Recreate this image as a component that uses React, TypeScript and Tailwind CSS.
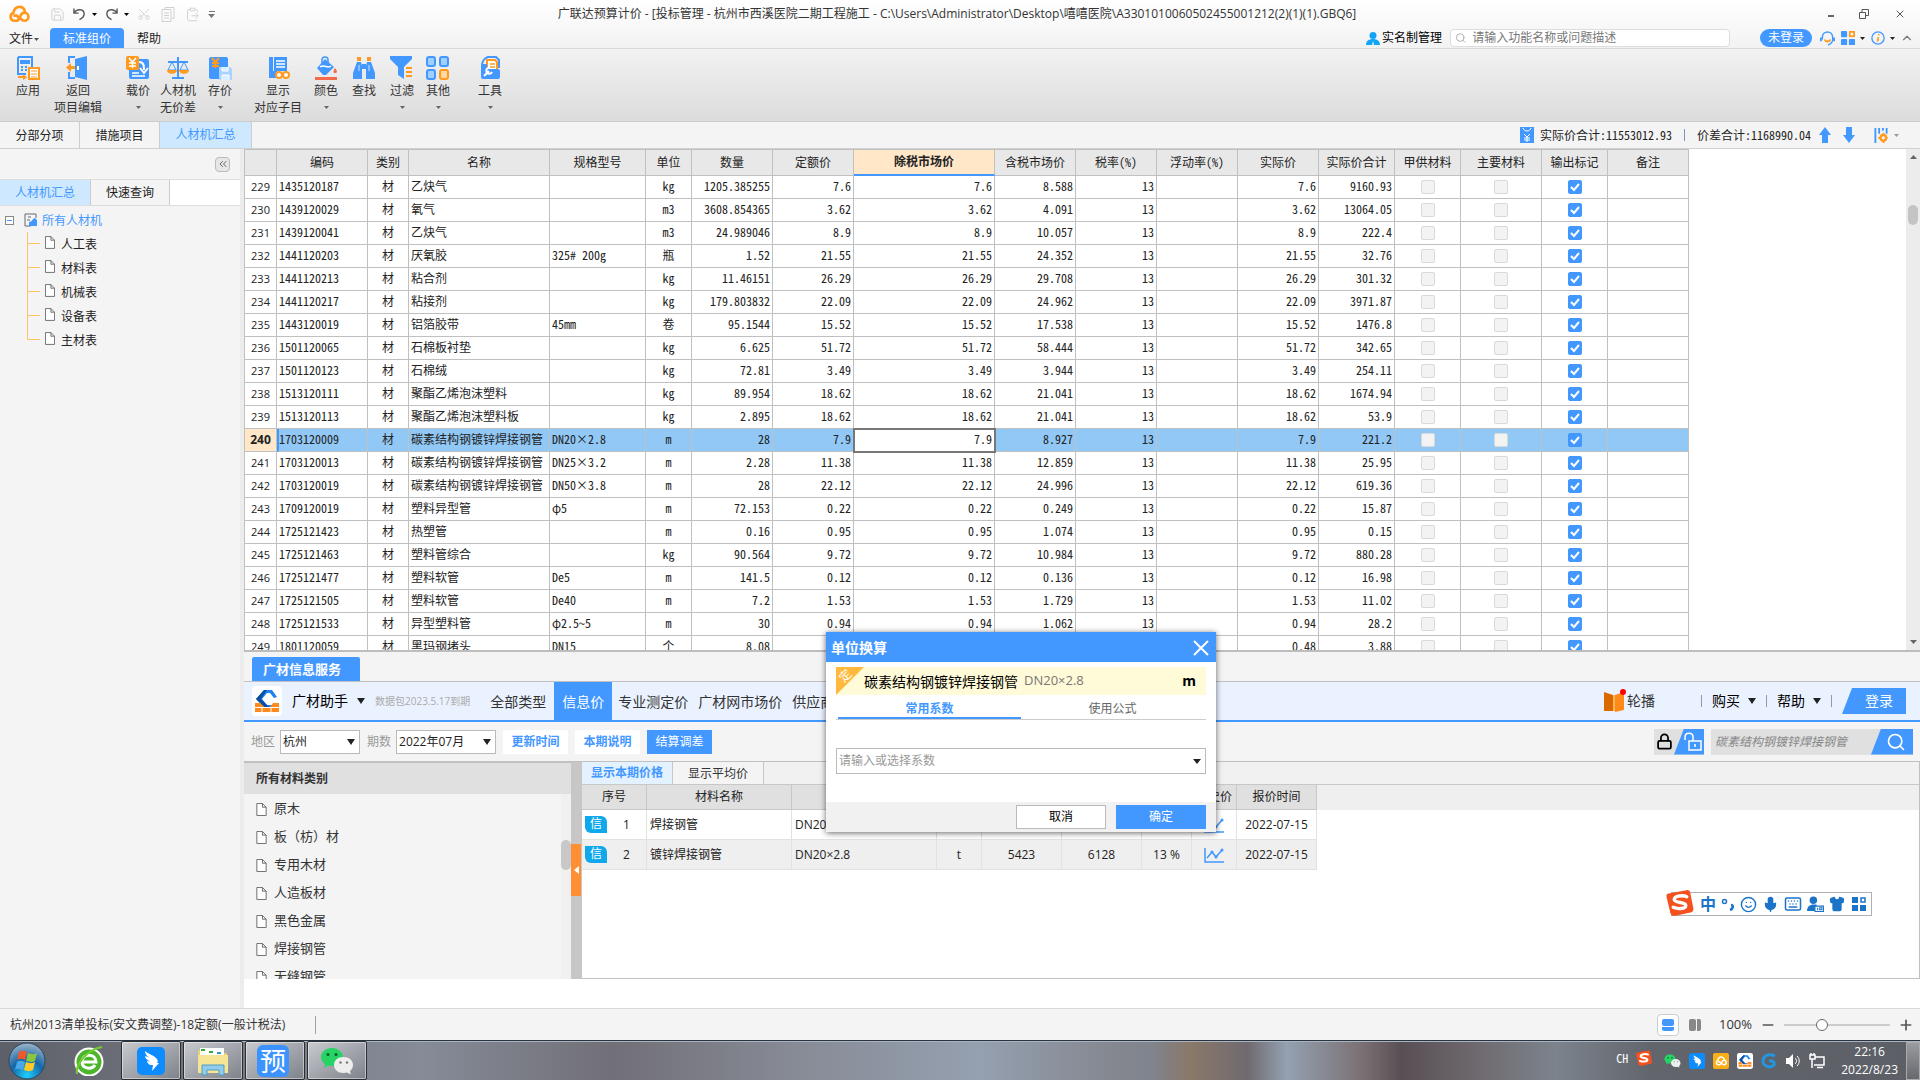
import { useState, type ReactNode } from 'react';
import { Search, X, ChevronUp, ChevronsLeft, Lock, LockOpen, Minus, Plus, Scissors, Copy, Save, ClipboardPaste, Mic, Keyboard, Shirt, Smile } from 'lucide-react';

type Row = [no: number, code: string, name: string, spec: string, unit: string, qty: string, quota: string, market: string, taxed: string, total: string];

const ROWS: Row[] = [
  [229, '1435120187', '乙炔气', '', 'kg', '1205.385255', '7.6', '7.6', '8.588', '9160.93'],
  [230, '1439120029', '氧气', '', 'm3', '3608.854365', '3.62', '3.62', '4.091', '13064.05'],
  [231, '1439120041', '乙炔气', '', 'm3', '24.989046', '8.9', '8.9', '10.057', '222.4'],
  [232, '1441120203', '厌氧胶', '325# 200g', '瓶', '1.52', '21.55', '21.55', '24.352', '32.76'],
  [233, '1441120213', '粘合剂', '', 'kg', '11.46151', '26.29', '26.29', '29.708', '301.32'],
  [234, '1441120217', '粘接剂', '', 'kg', '179.803832', '22.09', '22.09', '24.962', '3971.87'],
  [235, '1443120019', '铝箔胶带', '45mm', '卷', '95.1544', '15.52', '15.52', '17.538', '1476.8'],
  [236, '1501120065', '石棉板衬垫', '', 'kg', '6.625', '51.72', '51.72', '58.444', '342.65'],
  [237, '1501120123', '石棉绒', '', 'kg', '72.81', '3.49', '3.49', '3.944', '254.11'],
  [238, '1513120111', '聚酯乙烯泡沫塑料', '', 'kg', '89.954', '18.62', '18.62', '21.041', '1674.94'],
  [239, '1513120113', '聚酯乙烯泡沫塑料板', '', 'kg', '2.895', '18.62', '18.62', '21.041', '53.9'],
  [240, '1703120009', '碳素结构钢镀锌焊接钢管', 'DN20×2.8', 'm', '28', '7.9', '7.9', '8.927', '221.2'],
  [241, '1703120013', '碳素结构钢镀锌焊接钢管', 'DN25×3.2', 'm', '2.28', '11.38', '11.38', '12.859', '25.95'],
  [242, '1703120019', '碳素结构钢镀锌焊接钢管', 'DN50×3.8', 'm', '28', '22.12', '22.12', '24.996', '619.36'],
  [243, '1709120019', '塑料异型管', 'φ5', 'm', '72.153', '0.22', '0.22', '0.249', '15.87'],
  [244, '1725121423', '热塑管', '', 'm', '0.16', '0.95', '0.95', '1.074', '0.15'],
  [245, '1725121463', '塑料管综合', '', 'kg', '90.564', '9.72', '9.72', '10.984', '880.28'],
  [246, '1725121477', '塑料软管', 'De5', 'm', '141.5', '0.12', '0.12', '0.136', '16.98'],
  [247, '1725121505', '塑料软管', 'De40', 'm', '7.2', '1.53', '1.53', '1.729', '11.02'],
  [248, '1725121533', '异型塑料管', 'φ2.5~5', 'm', '30', '0.94', '0.94', '1.062', '28.2'],
  [249, '1801120059', '黑玛钢堵头', 'DN15', '个', '8.08', '0.48', '0.48', '0.542', '3.88'],
];

const COLUMNS: [string, string][] = [
  ['', 'w-[32px]'],
  ['编码', 'w-[91px]'],
  ['类别', 'w-[41px]'],
  ['名称', 'w-[141px]'],
  ['规格型号', 'w-[96px]'],
  ['单位', 'w-[46px]'],
  ['数量', 'w-[81px]'],
  ['定额价', 'w-[81px]'],
  ['除税市场价', 'w-[141px]'],
  ['含税市场价', 'w-[81px]'],
  ['税率(%)', 'w-[81px]'],
  ['浮动率(%)', 'w-[81px]'],
  ['实际价', 'w-[81px]'],
  ['实际价合计', 'w-[76px]'],
  ['甲供材料', 'w-[66px]'],
  ['主要材料', 'w-[81px]'],
  ['输出标记', 'w-[66px]'],
  ['备注', 'w-[81px]'],
];

const MONO = "font-['Noto_Sans_Mono_CJK_SC','DejaVu_Sans_Mono',monospace]";

function Caret({ size = 'h-[4px] w-[7px]', className = '' }: { size?: string; className?: string }) {
  return (
    <svg viewBox="0 0 8 5" preserveAspectRatio="none" className={`fill-current ${size} ${className}`}>
      <path d="M0 0h8L4 5z" />
    </svg>
  );
}

const SMALL = 'h-[3px] w-[5px]';
const LARGE = 'h-[6px] w-[8px]';

function FileIcon({ className = 'h-[13px] w-[10px]' }: { className?: string }) {
  return (
    <svg viewBox="0 0 11 14" className={`shrink-0 ${className}`} fill="#fff" stroke="#666">
      <path d="M.5 .5h6l4 4v9h-10zM6.5 .5v4h4" />
    </svg>
  );
}

function CloudLogo({ className = '' }: { className?: string }) {
  return (
    <svg viewBox="0 0 24 20" className={className} fill="none" stroke="currentColor" strokeWidth="3" strokeLinecap="round" strokeLinejoin="round">
      <path d="M9 17.500H6.500a4.500 4.500 0 0 1-.5-8.800C6 5 9 2 12.500 2c3 0 5 1.500 6 4.500M9.500 17.500c4 0 3-9 8.500-9a4.500 4.500 0 0 1 0 9c-2 0-3-1-3.500-2M7 12c2-1 4 0 4 2" />
    </svg>
  );
}

function HelperLogo({ className = '' }: { className?: string }) {
  return (
    <svg viewBox="0 0 30 30" className={className}>
      <rect width="30" height="30" rx="4" fill="#fff" />
      <path d="M12 4h8l5 7-3 1-4-5h-3l-5 6 5 6h7v2H12L4 13z" fill="#1b84f2" />
      <path d="M12 4h3l-6 9 8 8h-5L4 13z" fill="#0b4f9e" />
      <path d="M3 17h5l4 4h6l3-4h6v9H3z" fill="#ff8a1f" />
      <path d="M3 21.500h24M10 21v5M19 21v5" stroke="#fff" />
    </svg>
  );
}

function WeChat({ className = '' }: { className?: string }) {
  return (
    <svg viewBox="0 0 34 28" className={className}>
      <path d="M12 1C5.500 1 1 5 1 10c0 3 1.500 5.500 4 7l-1 4 4-2.500c1.300.4 2.600.5 4 .5 6 0 11-4 11-9s-5-9-11-9z" fill="#28d366" />
      <circle cx="8" cy="7.500" r="1.500" fill="#0b5a28" />
      <circle cx="16" cy="7.500" r="1.500" fill="#0b5a28" />
      <path d="M23.500 10c5.500 0 9.500 3.500 9.500 8 0 2.500-1.200 4.500-3 6l.8 3.500L27 25.500c-1 .3-2.300.5-3.500.5-5.500 0-9.500-3.500-9.500-8s4-8 9.500-8z" fill="#eee" />
      <circle cx="20.500" cy="15.500" r="1.200" fill="#777" />
      <circle cx="27" cy="15.500" r="1.200" fill="#777" />
    </svg>
  );
}

function DingTalk({ className = '' }: { className?: string }) {
  return (
    <svg viewBox="0 0 28 28" className={className}>
      <rect width="28" height="28" rx="5" fill="#0d8cff" />
      <path d="M8 4c3 3 9 4 12 8 1 2 1 3 0 4h2l-7 8 1-6h-3c-2-1-3-3-3-4l3 .5C10 13 8 11 8 9l4 1.500C9 8.500 8 6 8 4z" fill="#fff" />
    </svg>
  );
}

function Sogou({ className = '' }: { className?: string }) {
  return (
    <svg viewBox="0 0 28 28" className={className}>
      <path d="M1 5 22 1q2 0 2.500 2L28 21q0 2-2 3L8 28q-3 0-4-3L0 8q-.5-2 1-3z" fill="#f4511e" />
      <path d="M21 8c-4-2-13-1-13 3s12 2 12 6-9 4-13 2" fill="none" stroke="#fff" strokeWidth="3.500" strokeLinecap="round" />
    </svg>
  );
}

const B = '#4398ff';
const O = '#ff9a1f';

const RIBBON_ICONS: Record<string, ReactNode> = {
  apply: (
    <>
      <path d="M2 1h14v10M10 18H2V1" fill="none" stroke={B} strokeWidth="2" />
      <path d="M4 4h10v4H4z" fill={B} />
      <path d="M5 11h2m2 0h2M5 14h2m2 0h2" stroke={B} strokeWidth="2" />
      <path d="M13 12h10v11H13z" fill="#fff" stroke={O} strokeWidth="2" />
      <path d="M15 15h6m-6 3h6m-6 3h6" stroke={O} />
      <path d="M2 20h5v-2l4 3.500L7 24v-2H2z" fill={O} />
    </>
  ),
  back: (
    <>
      <path d="M9 1H3v6m0 9v6h6" fill="none" stroke={B} strokeWidth="2" />
      <path d="m9 3 12-3v24L9 21z" fill={B} />
      <path d="M12 10v4" stroke="#fff" strokeWidth="2" />
      <path d="M9 10H5V7l-5 4.500L5 16v-3h4z" fill={O} />
    </>
  ),
  load: (
    <>
      <rect x="3" y="3" width="20" height="20" rx="2" fill={B} />
      <path d="M6 17h7m-7 3h13" stroke="#fff" strokeWidth="1.500" />
      <path d="M13 6c5 0 5 4 5 8m-4-2 4 5 4-5" fill="none" stroke="#fff" strokeWidth="2" />
      <rect width="13" height="14" rx="2" fill={O} />
      <path d="m3 2 3.500 4L10 2M6.500 6v6M3 7h7M3 10h7" stroke="#fff" strokeWidth="1.500" fill="none" />
    </>
  ),
  scale: (
    <>
      <path d="M12 1v20M2 6h20M6 22h12" stroke={B} strokeWidth="2" />
      <path d="m6 6-4 8h8zm12 0-4 8h8z" fill="none" stroke={B} />
      <path d="M1 14h10c0 5-10 5-10 0zm12 0h10c0 5-10 5-10 0z" fill={O} />
    </>
  ),
  store: (
    <>
      <rect x="1" y="1" width="19" height="22" rx="2" fill={B} />
      <path d="m4 2 3.500 4L11 2M7.500 6v6M4 7h7M4 10h7" stroke={O} strokeWidth="2" fill="none" />
      <path d="M11 11h11l2 2v11H11z" fill="#a9d4ff" />
      <path d="M14 11v4h6v-4m-6 13v-5h7v5" fill="#dbeeff" stroke="#fff" />
    </>
  ),
  show: (
    <>
      <path d="M3 1h4v21H3zM8 1h13v14H8z" fill={B} />
      <path d="M10 5h9M10 8h9m-9 3h9" stroke="#fff" strokeWidth="1.500" />
      <path d="M7 15h4v7H3z" fill={B} />
      <circle cx="13" cy="19" r="3" fill="#fff" stroke={O} strokeWidth="2" />
      <circle cx="20" cy="19" r="3" fill="#fff" stroke={O} strokeWidth="2" />
    </>
  ),
  color: (
    <>
      <path d="m11 3 9 8-8 8H9l-6-7z" fill={B} />
      <path d="M8 10V4c0-4 6-4 6 0v3" fill="none" stroke={B} strokeWidth="1.500" />
      <path d="M6 11c4-3 8 2 11-1" stroke="#fff" strokeWidth="1.500" fill="none" />
      <path d="M21 12c3 4 2 5 0 5s-2-2 0-5z" fill="#f26a4b" />
      <path d="M1 22.500h22" stroke="#f26a4b" strokeWidth="3" />
    </>
  ),
  find: (
    <>
      <path d="M5 6h4l1 4v13H1v-6zm14 0h-4l-1 4v13h9v-6z" fill={B} />
      <path d="M5 1h4v4H5zm10 0h4v4h-4z" fill={O} />
      <path d="M10 8h4v5h-4z" fill={B} />
      <path d="M7 9v6M17 9v6" stroke="#cfe4ff" />
    </>
  ),
  filter: (
    <>
      <path d="M0 0h22v3l-8 8v12l-6-4v-8L0 3z" fill={B} />
      <path d="M16 12h6m-6 4h6m-6 4h6" stroke={O} strokeWidth="2" />
    </>
  ),
  other: (
    <g fill="#9fd0ff" stroke={B} strokeWidth="2">
      <rect x="1" y="1" width="8" height="9" rx="2" />
      <rect x="14" y="1" width="8" height="9" rx="2" />
      <rect x="1" y="14" width="8" height="9" rx="2" />
      <rect x="14" y="14" width="8" height="9" rx="2" fill="#ffd9a0" stroke={O} />
    </g>
  ),
  tool: (
    <>
      <path d="M4 9c0-4 3-7 6-8h8l3 3v8" fill="none" stroke={B} strokeWidth="2" />
      <path d="M9 4h8l2 2v9H9z" fill="#fff" stroke={O} strokeWidth="2" />
      <path d="M12 8h5m-5 3h5" stroke={O} strokeWidth="1.500" />
      <path d="M3 8h6v5h11q2 0 2 2v6q0 2-2 2H5q-2 0-2-2z" fill={B} />
      <path d="m6 20 5-5m-1-3a3 3 0 1 0 4 4" fill="none" stroke="#fff" strokeWidth="2" />
    </>
  ),
};

const RIBBON: { icon: string; lines: string[]; menu?: boolean; box: string }[] = [
  { icon: 'apply', lines: ['应用'], box: 'w-9' },
  { icon: 'back', lines: ['返回', '项目编辑'], box: 'w-16' },
  { icon: 'load', lines: ['载价'], menu: true, box: 'ml-2 w-10' },
  { icon: 'scale', lines: ['人材机', '无价差'], box: 'w-10' },
  { icon: 'store', lines: ['存价'], menu: true, box: 'w-11' },
  { icon: 'show', lines: ['显示', '对应子目'], box: 'ml-1.5 w-[60px]' },
  { icon: 'color', lines: ['颜色'], menu: true, box: 'w-9' },
  { icon: 'find', lines: ['查找'], box: 'ml-0.5 w-9' },
  { icon: 'filter', lines: ['过滤'], menu: true, box: 'ml-0.5 w-9' },
  { icon: 'other', lines: ['其他'], menu: true, box: 'w-9' },
  { icon: 'tool', lines: ['工具'], menu: true, box: 'ml-4 w-9' },
];

function TitleBar() {
  return (
    <header className="flex h-7 shrink-0 items-center px-2">
      <div className="flex flex-1 items-center">
        <CloudLogo className="h-[18px] w-[22px] text-[#ff9a1f]" />
        <div className="ml-5 flex items-center gap-2 text-[#d0d0d0]">
          <button aria-label="保存"><Save size={15} strokeWidth={1.5} /></button>
          <button aria-label="撤销" className="flex items-center gap-1.5 text-[#555]">
            <svg viewBox="0 0 14 14" className="h-[14px] w-[13px]" fill="none" stroke="currentColor" strokeWidth="1.500"><path d="M1 1v5h5M1 6c3-5 11-5 11 1 0 3-3 5-5 6" /></svg>
            <Caret size="h-[3px] w-[5px]" className="text-black" />
          </button>
          <button aria-label="重做" className="flex items-center gap-1.5 text-[#555]">
            <svg viewBox="0 0 14 14" className="h-[14px] w-[13px]" fill="none" stroke="currentColor" strokeWidth="1.500"><path d="M13 1v5H8m5 0C10 1 2 1 2 7c0 3 3 5 5 6" /></svg>
            <Caret size="h-[3px] w-[5px]" className="text-black" />
          </button>
          <button aria-label="剪切"><Scissors size={14} strokeWidth={1.5} className="-rotate-90" /></button>
          <button aria-label="复制" className="ml-0.5">
            <svg viewBox="0 0 14 15" className="h-[15px] w-[14px]" fill="none" stroke="currentColor"><path d="M4 2.500V.500h9v11h-2M1 2.500h9v12H1zM3 6h5M3 8.500h5M3 11h5" /></svg>
          </button>
          <button aria-label="粘贴" className="ml-0.5"><ClipboardPaste size={15} strokeWidth={1.5} /></button>
          <button aria-label="更多" className="flex flex-col items-center gap-0.5 text-[#777]">
            <span className="h-px w-1.5 bg-current" />
            <Caret />
          </button>
        </div>
      </div>
      <h1 className="text-xs text-[#333]">
        广联达预算计价 - [投标管理 - 杭州市西溪医院二期工程施工 - C:\Users\Administrator\Desktop\嘻嘻医院\A3301010060502455001212(2)(1)(1).GBQ6]
      </h1>
      <div className="flex flex-1 items-center justify-end gap-[25px] pr-1.5 text-[#555]">
        <button aria-label="最小化" className="mt-1 h-0.5 w-1.5 bg-[#666]" />
        <button aria-label="还原">
          <svg viewBox="0 0 10 10" className="size-[10px]" fill="none" stroke="currentColor"><path d="M.5 3.500h6v6h-6zM3 3V.500h6.500v6H7" /></svg>
        </button>
        <button aria-label="关闭"><X size={12} /></button>
      </div>
    </header>
  );
}

function MenuBar() {
  return (
    <nav className="flex h-[21px] shrink-0 items-stretch border-b border-[#d8d8d8] text-xs text-[#222]">
      <button className="flex w-[50px] items-center gap-px pt-0.5 pl-[9px]">文件<Caret size={SMALL} className="text-[#555]" /></button>
      <button className="w-[74px] rounded-t-sm bg-[#4398ff] pt-px text-white">标准组价</button>
      <button className="w-[50px] pt-px">帮助</button>
      <div className="ml-auto flex items-center pr-1.5">
        <button className="flex items-center gap-0.5 text-black">
          <svg viewBox="0 0 14 13" className="h-[13px] w-[14px]" fill="#12a5f5"><circle cx="7" cy="3.500" r="3.500" /><path d="M0 13c0-4 3-6 7-6s7 2 7 6H8l-1-4-1 4z" /></svg>
          实名制管理
        </button>
        <label className="ml-2 flex h-[18px] w-[280px] items-center gap-1.5 rounded-sm border border-[#ddd] bg-white pl-1">
          <Search size={12} className="text-[#aaa]" />
          <input aria-label="搜索功能" placeholder="请输入功能名称或问题描述" className="w-full outline-none placeholder:text-[#777]" />
        </label>
        <button className="ml-[30px] h-[18px] w-[52px] rounded-full bg-[#4398ff] text-white">未登录</button>
        <button aria-label="客服" className="ml-2">
          <svg viewBox="0 0 16 16" className="size-[15px]" fill="none" stroke="#4398ff" strokeWidth="1.500"><path d="M2.500 9V7c0-8 11-8 11 0v2c0 4-3 5-5 6" /><path d="M1 7v4m14-4v4" strokeWidth="2" /><path d="M5 9c1 3 5 3 6 0" stroke="#ff9a1f" strokeWidth="2" /></svg>
        </button>
        <button aria-label="应用中心" className="ml-1.5 flex items-center gap-[5px]">
          <svg viewBox="0 0 16 16" className="size-[14px]" fill="#4398ff"><rect width="7" height="7" rx="1" /><rect y="9" width="7" height="7" rx="1" /><rect x="9" y="9" width="7" height="7" rx="1" /><rect x="10" y="1" width="5" height="5" fill="none" stroke="#ff9a1f" strokeWidth="2" /></svg>
          <Caret size={SMALL} />
        </button>
        <button aria-label="关于" className="ml-1.5 flex items-center gap-[5px]">
          <svg viewBox="0 0 16 16" className="size-[14px]" fill="none" stroke="#4398ff" strokeWidth="1.500"><circle cx="8" cy="8" r="7" /><path d="m8.500 7-1 5m1.500-8.500-.3 1.500" stroke="#ff9a1f" strokeWidth="2" /></svg>
          <Caret size={SMALL} />
        </button>
        <button aria-label="收起功能区" className="ml-[5px]"><ChevronUp size={14} className="text-[#777]" /></button>
      </div>
    </nav>
  );
}

function Ribbon() {
  return (
    <div className="flex h-[73px] shrink-0 items-start border-b border-[#ccc] bg-linear-to-b from-[#f2f2f2] to-[#dcdcdc] pt-[7px] pl-2.5 text-xs text-[#333]">
      {RIBBON.map(item => (
        <button key={item.icon} className={`flex flex-col items-center whitespace-nowrap ${item.box}`}>
          <svg viewBox="0 0 24 24" className="mb-0.5 size-6">{RIBBON_ICONS[item.icon]}</svg>
          {item.lines.map(line => <span key={line} className="h-[17px] leading-[18px]">{line}</span>)}
          {item.menu && <Caret size={SMALL} className="mt-[7px] text-[#666]" />}
        </button>
      ))}
    </div>
  );
}

function ViewTabs() {
  return (
    <div className="flex h-[27px] shrink-0 items-stretch border-b border-[#d0d0d0] bg-[#f4f4f4] text-xs">
      <button className="w-20 border-r border-[#ccc] pt-0.5">分部分项</button>
      <button className="w-20 border-r border-[#ccc] pt-0.5">措施项目</button>
      <button className="w-[92px] border-r border-[#ccc] bg-[#cde8ff] text-[#4398ff]">人材机汇总</button>
      <div className={`ml-auto flex items-center pr-[21px] ${MONO}`}>
        <svg viewBox="0 0 14 16" className="mr-1.5 h-4 w-[14px]"><path d="M0 0h14v16H0z" fill={B} /><path d="M3 1c1 4 7 4 8 0M4 7l3 3 3-3M7 10v5M4 11h6m-6 2h6" fill="none" stroke="#fff" /></svg>
        <span>实际价合计:11553012.93</span>
        <span className="mx-3 h-3 w-px bg-[#7a96b8]" />
        <span>价差合计:1168990.04</span>
        <button aria-label="上移" className="ml-2"><svg viewBox="0 0 12 16" className="h-4 w-3" fill={B}><path d="m6 0 6 8H9v8H3V8H0z" /></svg></button>
        <button aria-label="下移" className="ml-3"><svg viewBox="0 0 12 16" className="h-4 w-3" fill={B}><path d="m6 16 6-8H9V0H3v8H0z" /></svg></button>
        <button aria-label="列设置" className="ml-[19px] flex items-center gap-1.5 text-[#999]">
          <svg viewBox="0 0 14 16" className="h-[15px] w-[14px]"><path d="M1 0v16M5 0v6m4-6v3m4-3v6" stroke={B} strokeWidth="2" /><circle cx="9.500" cy="10.500" r="3" fill="none" stroke={O} strokeWidth="2.500" /><path d="M9.500 5v2m0 7v2M4 10.500h2m7 0h1" stroke={O} strokeWidth="2" /></svg>
          <Caret size={SMALL} />
        </button>
      </div>
    </div>
  );
}

function Sidebar() {
  return (
    <aside className="flex w-[244px] shrink-0 flex-col border-r-4 border-[#ececec] bg-[#f4f4f4] text-xs">
      <div className="flex h-[30px] items-center justify-end pr-2.5">
        <button aria-label="折叠" className="grid size-[15px] place-items-center rounded-sm border border-[#bbb] bg-[#e6e6e6] text-[#666]"><ChevronsLeft size={12} /></button>
      </div>
      <div className="flex h-[27px] border-y border-[#ddd] bg-white">
        <button className="w-[91px] border-r border-[#ccc] bg-[#cde8ff] text-[#4398ff]">人材机汇总</button>
        <button className="w-[79px] border-r border-[#ccc] bg-[#f4f4f4]">快速查询</button>
      </div>
      <div className="pt-0.5 pl-[5px]">
        <div className="flex h-6 items-center text-[#4398ff]">
          <button aria-label="收起" className="grid size-[9px] place-items-center border border-[#888] bg-white"><span className="h-px w-[5px] bg-[#4398ff]" /></button>
          <svg viewBox="0 0 14 14" className="mr-1 ml-2.5 size-[14px]" fill="none"><path d="M7 13H1V1h11v4M4 4h3M3 7h3" stroke="#667" /><path d="M5 9c3 0 4-4 6-4l2 2v6H5z" fill={B} /></svg>
          <span className="pt-0.5">所有人材机</span>
        </div>
        <ul className="ml-[22px]">
          {['人工表', '材料表', '机械表', '设备表', '主材表'].map(label => (
            <li key={label} className="group flex h-6 items-center">
              <span className="flex h-6 w-[13px] flex-col">
                <span className="h-3 w-full border-b border-l border-[#ffc266]" />
                <span className="h-3 border-l border-[#ffc266] group-last:border-transparent" />
              </span>
              <FileIcon className="mb-1 ml-[5px] h-[13px] w-[10px]" />
              <span className="ml-1.5 pt-0.5">{label}</span>
            </li>
          ))}
        </ul>
      </div>
    </aside>
  );
}

function Check({ label, checked = false }: { label: string; checked?: boolean }) {
  return (
    <label className="grid place-items-center">
      <input type="checkbox" aria-label={label} defaultChecked={checked} disabled={!checked}
        className="col-start-1 row-start-1 size-[14px] appearance-none rounded-xs border border-[#d9d9d9] bg-[#f3f3f3] checked:border-[#4398ff] checked:bg-[#4398ff]" />
      {checked && (
        <svg viewBox="0 0 14 14" className="pointer-events-none col-start-1 row-start-1 size-[14px]" fill="none" stroke="#fff" strokeWidth="2"><path d="m3 7 3 3 5-6" /></svg>
      )}
    </label>
  );
}

function PriceTable() {
  const [selected, setSelected] = useState(240);

  return (
    <div className="flex min-h-0 flex-1 border-b-2 border-[#bdbdbd] bg-white">
      <div className="min-w-0 flex-1 overflow-hidden">
        <table className={`w-[1445px] table-fixed border-separate border-spacing-0 border-t border-l border-[#c0c0c0] text-xs text-[#222] ${MONO}`}>
          <thead>
            <tr className="h-[26px]">
              {COLUMNS.map(([label, width]) => (
                <th key={label} className={`${width} overflow-hidden border-r border-[#c0c0c0] p-0 pb-0.5 whitespace-nowrap ${label === '除税市场价' ? 'border-b-2 border-b-[#4398ff] bg-[#ffe7c8] font-bold' : 'border-b bg-[#e8e8e8] font-normal'}`}>{label}</th>
              ))}
            </tr>
          </thead>
          <tbody>
            {ROWS.map(([no, code, name, spec, unit, qty, quota, market, taxed, total]) => {
              const on = no === selected;
              const base = 'h-[23px] overflow-hidden whitespace-nowrap border-r border-b border-[#c0c0c0] px-0.5 leading-4';
              const cell = `${base} pt-0 pb-0.5`;
              const num = `${cell} text-right`;
              return (
                <tr key={no} onClick={() => setSelected(no)} className={on ? 'bg-[#91c8f6]' : 'bg-white'}>
                  <td className={`${base} py-0 text-center font-['Open_Sans','Noto_Sans_CJK_SC',sans-serif] ${on ? 'bg-[#ffe7c8] text-xs font-bold' : 'text-[11px]'}`}>{no}</td>
                  <td className={`${cell} ${on ? 'border-l-2 border-l-[#4398ff] pl-0' : ''}`}>{code}</td>
                  <td className={`${cell} text-center`}>材</td>
                  <td className={cell}>{name}</td>
                  <td className={cell}>{spec}</td>
                  <td className={`${cell} text-center`}>{unit}</td>
                  <td className={num}>{qty}</td>
                  <td className={num}>{quota}</td>
                  <td className={`${num} ${on ? 'bg-white outline-2 -outline-offset-1 outline-[#777]' : ''}`}>{market}</td>
                  <td className={num}>{taxed}</td>
                  <td className={num}>13</td>
                  <td className={num} />
                  <td className={num}>{market}</td>
                  <td className={num}>{total}</td>
                  <td className={`${base} py-0`}><Check label={`${no} 甲供材料`} /></td>
                  <td className={`${base} py-0`}><Check label={`${no} 主要材料`} /></td>
                  <td className={`${base} py-0`}><Check label={`${no} 输出标记`} checked /></td>
                  <td className={cell} />
                </tr>
              );
            })}
          </tbody>
        </table>
      </div>
      <div className="flex w-[14px] shrink-0 flex-col items-center bg-[#ececec] py-1.5 text-[#666]">
        <Caret className="rotate-180" />
        <span className="mt-[46px] h-5 w-2.5 rounded-full bg-[#c4c4c4]" />
        <Caret className="mt-auto" />
      </div>
    </div>
  );
}

function Picker({ label, value, className = '' }: { label: string; value: string; className?: string }) {
  return (
    <label className="flex items-center gap-[5px] text-[#999]">
      {label}
      <span className={`grid h-6 items-center border border-[#bbb] bg-white text-[#222] ${className}`}>
        <select className="col-start-1 row-start-1 w-full appearance-none pl-0.5 outline-none"><option>{value}</option></select>
        <Caret size={LARGE} className="pointer-events-none col-start-1 row-start-1 mr-1 justify-self-end" />
      </span>
    </label>
  );
}

function HelperNav() {
  return (
    <div className="flex h-10 shrink-0 items-center border-b-2 border-[#4398ff] bg-[#ebf2ff] pl-2 text-sm text-[#333]">
      <HelperLogo className="size-[30px]" />
      <button className="ml-2.5 flex items-center gap-[9px] text-black">广材助手<Caret size={LARGE} className="text-[#222]" /></button>
      <span className="ml-2.5 text-[10px] text-[#aaa]">数据包2023.5.17到期</span>
      <button className="ml-5 pt-0.5">全部类型</button>
      <button className="ml-2 h-full w-[58px] bg-[#4398ff] pt-0.5 text-white">信息价</button>
      <button className="ml-1.5 pt-0.5">专业测定价</button>
      <button className="ml-2.5 pt-0.5">广材网市场价</button>
      <button className="ml-2.5 pt-0.5">供应商报价</button>
      <div className="ml-auto flex items-center pr-[14px] text-black">
        <button className="flex items-center gap-px text-[#333]">
          <svg viewBox="0 0 22 24" className="h-6 w-[22px]"><path d="M0 3 9 6v16L0 22z" fill="#d96a00" /><path d="M9 6h2v16H9z" fill="#ffb35c" /><path d="m11 6 9-3v18l-9 2z" fill="#ff8a1a" /><circle cx="19" cy="3" r="3" fill="#f00" /></svg>
          轮播
        </button>
        <span className="mr-2.5 ml-[46px] h-3 w-px bg-[#999]" />
        <button className="flex items-center gap-2">购买<Caret size={LARGE} className="text-[#222]" /></button>
        <span className="mx-2.5 h-3 w-px bg-[#999]" />
        <button className="flex items-center gap-2">帮助<Caret size={LARGE} className="text-[#222]" /></button>
        <span className="mx-2.5 h-3 w-px bg-[#999]" />
        <button className="h-[26px] w-16 bg-[#4398ff] pl-2.5 text-white [clip-path:polygon(10px_0,100%_0,100%_100%,0_100%)]">登录</button>
      </div>
    </div>
  );
}

function HelperTools() {
  return (
    <div className="flex h-10 shrink-0 items-center gap-[7px] border-b border-[#c0c0c0] bg-[#f4f4f4] px-[7px] text-xs">
      <Picker label="地区" value="杭州" className="w-20" />
      <Picker label="期数" value="2022年07月" className="w-[100px]" />
      <button className="h-6 w-[65px] bg-white font-bold text-[#4398ff]">更新时间</button>
      <button className="h-6 w-[65px] bg-white font-bold text-[#4398ff]">本期说明</button>
      <button className="h-6 w-[65px] bg-[#4398ff] text-white">结算调差</button>
      <div className="ml-auto flex h-[26px] w-[50px] bg-[#e0e0e0]">
        <button aria-label="锁定" className="grid w-5 place-items-center text-black"><Lock size={17} strokeWidth={2.5} /></button>
        <button aria-label="解锁" className="grid flex-1 place-items-center bg-[#4398ff] pl-2 text-white [clip-path:polygon(10px_0,100%_0,100%_100%,0_100%)]">
          <svg viewBox="0 0 18 20" className="h-5 w-[18px]" fill="none" stroke="currentColor" strokeWidth="1.500"><path d="M1 8V5c0-5 8-5 8 0v4M5 9h12v9H5zM11 12v3" /></svg>
        </button>
      </div>
      <form className="flex h-[26px] w-[202px] bg-[#e0e0e0]">
        <input aria-label="材料搜索" placeholder="碳素结构钢镀锌焊接钢管" className="min-w-0 flex-1 pl-1 italic outline-none placeholder:text-[#888]" />
        <button type="button" aria-label="搜索" className="grid w-[42px] place-items-center bg-[#4398ff] pl-2 text-white [clip-path:polygon(10px_0,100%_0,100%_100%,0_100%)]"><Search size={20} /></button>
      </form>
    </div>
  );
}

const CATEGORIES = ['原木', '板（枋）材', '专用木材', '人造板材', '黑色金属', '焊接钢管', '无缝钢管'];

const QUOTES = [
  { no: 1, name: '焊接钢管', spec: 'DN20×2.8', unit: 't', net: '5012', taxed: '5664', rate: '13 %', date: '2022-07-15' },
  { no: 2, name: '镀锌焊接钢管', spec: 'DN20×2.8', unit: 't', net: '5423', taxed: '6128', rate: '13 %', date: '2022-07-15' },
];

const QUOTE_COLUMNS: [string, string][] = [
  ['序号', 'w-[65px]'],
  ['材料名称', 'w-[145px]'],
  ['规格型号', 'w-[145px]'],
  ['单位', 'w-[45px]'],
  ['除税价', 'w-[80px]'],
  ['含税价', 'w-[80px]'],
  ['税率', 'w-[50px]'],
  ['历史价', 'w-[45px]'],
  ['报价时间', 'w-[80px]'],
];

function QuoteTable() {
  return (
    <table className="w-[735px] table-fixed border-separate border-spacing-0 text-xs text-[#222]">
      <thead>
        <tr className="h-[25px]">
          {QUOTE_COLUMNS.map(([label, width]) => (
            <th key={label} className={`${width} border-r border-b border-[#c8c8c8] bg-[#e0e0e0] p-0 font-normal whitespace-nowrap`}>{label}</th>
          ))}
        </tr>
      </thead>
      <tbody>
        {QUOTES.map(q => (
          <tr key={q.no} className="h-[30px] text-center odd:bg-white even:bg-[#efefef] *:border-r *:border-b *:border-[#e2e2e2] *:px-[3px] *:py-0">
            <td>
              <span className="flex items-center gap-4">
                <span className="h-[17px] w-[22px] rounded-tr-md rounded-bl-md bg-[#0fa8ea] text-center leading-4 text-white">信</span>
                {q.no}
              </span>
            </td>
            <td className="text-left">{q.name}</td>
            <td className="text-left">{q.spec}</td>
            <td>{q.unit}</td>
            <td>{q.net}</td>
            <td>{q.taxed}</td>
            <td>{q.rate}</td>
            <td>
              <button aria-label="历史价走势" className="align-middle">
                <svg viewBox="0 0 20 15" className="h-[15px] w-5" fill="none" stroke={B} strokeWidth="1.500"><path d="M1 0v14h19M3 10l5-6 4 5 6-7" /><g fill={B} stroke="none"><circle cx="8" cy="4" r="1.500" /><circle cx="12" cy="9" r="1.500" /><circle cx="18" cy="2" r="1.500" /></g></svg>
              </button>
            </td>
            <td>{q.date}</td>
          </tr>
        ))}
      </tbody>
    </table>
  );
}

function HelperPanel() {
  return (
    <section className="flex h-[356px] shrink-0 flex-col bg-white pb-[29px]">
      <div className="flex h-[30px] shrink-0 items-end border-b border-[#c0c0c0] bg-[#f4f4f4] pl-2">
        <button className="h-6 w-[108px] rounded-t-xs bg-[#4398ff] pt-px pr-2 text-[13px] font-bold text-white">广材信息服务</button>
      </div>
      <HelperNav />
      <HelperTools />
      <div className="flex min-h-0 flex-1">
        <div className="flex w-[327px] shrink-0 flex-col bg-[#f4f4f4]">
          <h2 className="h-8 shrink-0 border-t border-[#c0c0c0] bg-[#e0e0e0] pl-3 text-xs leading-8 font-bold text-[#333]">所有材料类别</h2>
          <div className="flex min-h-0 flex-1">
            <ul className="flex-1 overflow-hidden pt-px text-[13px] text-[#333]">
              {CATEGORIES.map(c => <li key={c} className="flex h-7 items-center gap-[7px] pl-3"><FileIcon className="h-[13px] w-[11px]" />{c}</li>)}
            </ul>
            <div className="w-2.5 bg-[#f0f0f0] pt-[46px]"><div className="h-[30px] rounded-full bg-[#c8c8c8]" /></div>
          </div>
        </div>
        <div className="flex w-[11px] shrink-0 flex-col bg-[#c9c7c5] pt-[82px]">
          <button aria-label="收起类别" className="grid h-[52px] w-2.5 place-items-center bg-[#ff8f33] text-white">
            <svg viewBox="0 0 5 8" className="h-2 w-[5px] fill-current"><path d="M5 0v8L0 4z" /></svg>
          </button>
        </div>
        <div className="flex min-w-0 flex-1 flex-col border-r border-b border-[#c0c0c0]">
          <div className="flex h-[23px] shrink-0 border-b border-[#c8c8c8] bg-[#f1f1f1] text-xs">
            <button className="w-[91px] border-r border-[#c8c8c8] bg-[#e4f1ff] font-bold text-[#4398ff]">显示本期价格</button>
            <button className="w-[91px] border-r border-[#c8c8c8] bg-[#f4f4f4] pt-0.5 text-[#333]">显示平均价</button>
          </div>
          <div className="bg-[linear-gradient(#efefef_25px,#fff_25px)]">
            <QuoteTable />
          </div>
        </div>
      </div>
    </section>
  );
}

function UnitDialog() {
  return (
    <div role="dialog" aria-label="单位换算" className="absolute top-[632px] left-[826px] flex h-[200px] w-[390px] flex-col bg-white text-xs shadow-[0_1px_6px_rgba(0,0,0,0.6)]">
      <div className="flex h-[30px] items-center justify-between bg-[#4398ff] pt-0.5 pr-[7px] pl-[5px] text-sm font-bold text-white">
        单位换算
        <button aria-label="关闭">
          <svg viewBox="0 0 16 16" className="size-4" fill="none" stroke="currentColor" strokeWidth="2"><path d="m1 1 14 14M15 1 1 15" /></svg>
        </button>
      </div>
      <div className="mx-2.5 mt-[5px] flex h-7 items-center bg-[#fffad7]">
        <span className="h-7 w-7 bg-[#ffb93c] text-white [clip-path:polygon(0_0,100%_0,0_100%)]"><span className="block w-[18px] -rotate-45 pt-px text-center">定</span></span>
        <span className="pt-0.5 text-sm text-black">碳素结构钢镀锌焊接钢管</span>
        <span className="ml-1.5 text-[13px] text-[#777]">DN20×2.8</span>
        <span className="mr-2.5 ml-auto text-sm font-bold text-black">m</span>
      </div>
      <div className="mx-2.5 flex h-[25px] border-b border-[#ccc] px-0.5">
        <button className="flex-1 border-b-2 border-[#4398ff] pt-1.5 font-bold text-[#4398ff]">常用系数</button>
        <button className="flex-1 border-b-2 border-transparent pt-1.5 text-[#666]">使用公式</button>
      </div>
      <label className="mx-2.5 mt-7 grid h-[26px] items-center border border-[#bbb]">
        <select aria-label="换算系数" className="col-start-1 row-start-1 w-full appearance-none pl-0.5 text-[#999] outline-none"><option>请输入或选择系数</option></select>
        <Caret size="h-[5px] w-2" className="pointer-events-none col-start-1 row-start-1 mr-1 justify-self-end text-[#222]" />
      </label>
      <div className="mt-auto flex h-[30px] items-center justify-end gap-2.5 bg-[#f1f1f1] pr-2.5">
        <button className="h-6 w-[90px] border border-[#bbb] bg-white text-black">取消</button>
        <button className="h-6 w-[90px] bg-[#4398ff] text-white">确定</button>
      </div>
    </div>
  );
}

function InputMethodBar() {
  return (
    <div className="absolute right-12 bottom-[164px] flex h-6 items-center border border-[#b0b0b8] bg-white pr-[5px] text-[#1c74c8]">
      <Sogou className="-mt-1 -ml-1.5 h-[27px] w-7" />
      <div className="ml-1.5 flex items-center gap-[5px]">
        <span className="text-base leading-4 font-bold">中</span>
        <svg viewBox="0 0 14 14" className="size-[14px]" fill="none" stroke="currentColor"><circle cx="3.500" cy="4.500" r="2" strokeWidth="1.500" /><path d="M10 8c3 0 2 4-1 5" strokeWidth="2.500" /></svg>
        <Smile size={17} />
        <Mic size={17} className="fill-current" />
        <Keyboard size={18} />
        <svg viewBox="0 0 16 16" className="size-[17px]" fill="currentColor"><circle cx="6" cy="4" r="3.500" /><path d="M0 14c0-4 3-6 6-6h3v6z" /><path d="M7.500 9.500h8v5h-8zM10 11v2.500M12 11h2v2h-2z" fill="#fff" stroke="currentColor" /></svg>
        <Shirt size={16} className="fill-current" />
        <svg viewBox="0 0 14 14" className="ml-0.5 size-[14px]" fill="currentColor"><path d="M0 0h6v6H0zM0 8h6v6H0zM8 8h6v6H8z" /><path d="M9 1h4v4H9z" fill="none" stroke="currentColor" strokeWidth="1.500" /></svg>
      </div>
    </div>
  );
}

function StatusBar() {
  return (
    <footer className="flex h-8 shrink-0 items-center border-t border-[#d8d8d8] bg-[#f4f4f4] pr-1.5 pl-2.5 text-xs text-[#333]">
      <span className="w-[306px] border-r border-[#9aa2ac] leading-[18px]">杭州2013清单投标(安文费调整)-18定额(一般计税法)</span>
      <div className="ml-auto flex items-center">
        <button aria-label="上下视图" className="flex size-[22px] flex-col items-center justify-center gap-px rounded-sm border border-[#ccc] bg-white">
          <span className="h-[7px] w-3 rounded-xs bg-[#4398ff]" /><span className="h-1 w-3 rounded-b-xs bg-[#4398ff]" />
        </button>
        <button aria-label="左右视图" className="ml-2.5 flex gap-px">
          <span className="h-3 w-[7px] rounded-xs bg-[#888]" /><span className="h-3 w-1 rounded-r-xs bg-[#888]" />
        </button>
        <span className="ml-[18px] text-[13px]">100%</span>
        <button aria-label="缩小" className="ml-2 text-[#555]"><Minus size={16} strokeWidth={2.5} /></button>
        <input type="range" aria-label="缩放" min={0} max={100} defaultValue={34}
          className="mx-2 h-3 w-[106px] appearance-none bg-[linear-gradient(transparent_5px,#ccc_5px,#ccc_7px,transparent_7px)] [&::-webkit-slider-thumb]:size-3 [&::-webkit-slider-thumb]:appearance-none [&::-webkit-slider-thumb]:rounded-full [&::-webkit-slider-thumb]:border [&::-webkit-slider-thumb]:border-[#666] [&::-webkit-slider-thumb]:bg-white" />
        <button aria-label="放大" className="text-[#555]"><Plus size={16} strokeWidth={2.5} /></button>
      </div>
    </footer>
  );
}

function TaskButton({ label, children }: { label: string; children: ReactNode }) {
  return (
    <button aria-label={label} className="grid h-[39px] w-[60px] place-items-center rounded-xs border border-[#2b2e33] bg-linear-to-br from-[#c9cbd0] to-[#7e828a] shadow-[inset_0_0_0_1px_rgba(255,255,255,0.45)]">{children}</button>
  );
}

function Taskbar() {
  return (
    <div className="flex h-10 shrink-0 items-center gap-0.5 border-t border-[#2a3340] bg-[linear-gradient(90deg,#5d6069,#73767e_10%,#858b97_22%,#716f77_32%,#868a94_41%,#95a0b0_51%,#84878f_58%,#7f848e_60%,#8a7868_62%,#6f6a70_65%,#94a1b1_67%,#7a7072_71%,#584f55_73%,#6f6a6f_77%,#7c838d_81%,#62656c_86%,#5c5f66)] text-white shadow-[inset_0_1px_0_#aab4c0]">
      <button aria-label="开始" className="ml-2 w-[38px]">
        <svg viewBox="0 0 38 38" className="size-[38px]">
          <defs><radialGradient id="orb" cx=".5" cy=".9" r=".9"><stop offset="0" stopColor="#1fd0ff" /><stop offset=".5" stopColor="#1566a8" /><stop offset="1" stopColor="#9fb6c8" /></radialGradient></defs>
          <circle cx="19" cy="19" r="18" fill="url(#orb)" stroke="#29465e" />
          <path d="M11 10c3-2 5-1 8 0l-2 8c-3-1-5-2-8 0z" fill="#f0582a" />
          <path d="M20 11c3 1 5 2 9 0l-2 8c-4 2-6 0-9 0z" fill="#8cc63f" />
          <path d="M9 20c3-2 5-1 8 0l-2 8c-3-1-5-2-8 0z" fill="#49a8e8" />
          <path d="M18 20c3 1 5 2 9 0l-2 8c-4 2-6 1-9 0z" fill="#ffc928" />
        </svg>
      </button>
      <button aria-label="浏览器" className="mr-[15px] ml-[26px]">
        <svg viewBox="0 0 30 30" className="size-[30px]"><circle cx="15" cy="16" r="13.500" fill="#4cb52c" stroke="#fff" strokeWidth="2" /><path d="M8 16h14c0-9-14-9-14 0 0 7 10 8 13 3" fill="none" stroke="#fff" strokeWidth="3" /><path d="M3 28C1 18 14 3 28 1" fill="none" stroke="#6fcf2f" strokeWidth="2" /></svg>
      </button>
      <TaskButton label="钉钉"><DingTalk className="size-7" /></TaskButton>
      <TaskButton label="资源管理器">
        <svg viewBox="0 0 32 30" className="h-[30px] w-8"><path d="M1 4h9l2 3h18v20H1z" fill="#e9cf72" /><path d="M3 2h24v9H3z" fill="#fff" /><path d="M4 3h4v2H4zm8 2h4v2h-4z" fill="#3a3" /><path d="M20 6h4v2h-4z" fill="#39c" /><path d="M1 9h30v18H1z" fill="#f7e596" /><path d="M5 29V19h22v10h-5v-5H10v5z" fill="#8fcdea" stroke="#4f9dc4" /></svg>
      </TaskButton>
      <TaskButton label="预算"><span className="mr-1 grid size-8 place-items-center rounded-md bg-[#3c93ff] text-[26px] leading-none">预</span></TaskButton>
      <TaskButton label="微信"><WeChat className="h-7 w-[34px]" /></TaskButton>
      <div className="ml-auto flex items-center gap-2">
        <span className={`-mt-1.5 text-xs ${MONO}`}>CH</span>
        <Sogou className="-mt-1.5 size-4" />
        <WeChat className="ml-1 h-[14px] w-[17px]" />
        <DingTalk className="size-4" />
        <span className="grid size-4 place-items-center rounded-xs bg-[#faae17] text-white"><CloudLogo className="h-[10px] w-3" /></span>
        <HelperLogo className="size-4" />
        <svg viewBox="0 0 16 16" className="size-4" fill="none" stroke="#2297e0" strokeWidth="3"><path d="M14 3c-7-3-12 0-12 5s7 8 11 4c1-3-2-5-5-4" /></svg>
        <svg viewBox="0 0 16 16" className="size-4" fill="#fff"><path d="M1 5h3l4-4v14l-4-4H1z" /><path d="M10 5c2 2 2 4 0 6m2-8c3 3 3 7 0 10" fill="none" stroke="#fff" /></svg>
        <svg viewBox="0 0 16 16" className="size-4" fill="none" stroke="#fff" strokeWidth="1.500"><path d="M6 4h9v8H5M8 14.500h6M1 2h5v4H1zM3 6v9M2 0v2m3-2v2" /></svg>
        <div className="ml-2 text-center text-xs leading-[18px]">
          <div>22:16</div>
          <div>2022/8/23</div>
        </div>
        <button aria-label="显示桌面" className="h-[38px] w-[14px] border border-[#aaa] bg-linear-to-b from-[#9a9ca0] to-[#66696e]" />
      </div>
    </div>
  );
}

export default function App() {
  return (
    <div className="relative flex h-screen flex-col overflow-hidden bg-[#f4f4f4] font-['Open_Sans','Noto_Sans_CJK_SC',sans-serif] text-[#222]">
      <div className="shrink-0 bg-linear-to-b from-white to-[#f2f2f2]">
        <TitleBar />
        <MenuBar />
      </div>
      <Ribbon />
      <ViewTabs />
      <div className="flex min-h-0 flex-1">
        <Sidebar />
        <main className="flex min-w-0 flex-1 flex-col">
          <PriceTable />
          <HelperPanel />
        </main>
      </div>
      <StatusBar />
      <Taskbar />
      <UnitDialog />
      <InputMethodBar />
    </div>
  );
}
